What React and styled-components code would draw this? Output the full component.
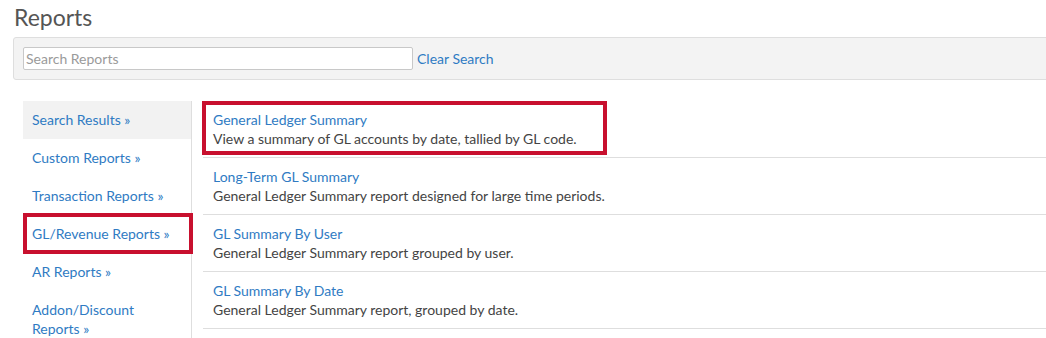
import React from 'react';
import styled, { createGlobalStyle } from 'styled-components';

const GlobalStyle = createGlobalStyle`
  body {
    margin: 0;
    background: #fff;
    font-family: Lato, "Liberation Sans", sans-serif;
    font-size: 14px;
    color: #444;
  }
`

const Page = styled.div`
  padding: 0 0 0 13px;
  overflow: hidden;
`

const Title = styled.h1`
  margin: 0;
  padding: 3px 0 0 1px;
  font-size: 23px;
  font-weight: 400;
  line-height: 28px;
  color: #555;
`

const SearchBar = styled.div`
  margin-top: 6px;
  margin-right: -4px;
  height: 41px;
  display: flex;
  align-items: center;
  gap: 4px;
  padding: 0 9px;
  background: #f3f3f3;
  border: 1px solid #dedede;
  border-radius: 3px;
`

const SearchInput = styled.input`
  width: 390px;
  height: 23px;
  box-sizing: border-box;
  padding: 0 2px;
  border: 1px solid #c8c8c8;
  border-radius: 2px;
  font-family: inherit;
  font-size: 14px;
  color: #444;
  background: #fff;
  &::placeholder {
    color: #9a9a9a;
  }
`

const Link = styled.a`
  color: #2f7bc3;
  text-decoration: none;
  cursor: pointer;
`

const Body = styled.div`
  display: flex;
  margin-top: 21px;
  padding-left: 10px;
`

const Sidebar = styled.ul`
  list-style: none;
  margin: 0;
  padding: 0 0 20px;
  width: 168px;
  flex: none;
  border-right: 1px solid #dedede;
`

const SideItem = styled.li`
  position: relative;
  padding: 9px 9px 10px;
  line-height: 19px;
  background: ${p => (p.active ? '#f2f2f2' : 'transparent')};
  ${p => p.marked && `
    &::after {
      content: '';
      position: absolute;
      top: -2px;
      left: 0;
      right: -2px;
      bottom: -1px;
      border: 4px solid #c8102e;
    }
  `}
`

const ReportList = styled.div`
  flex: 1;
  margin-left: 11px;
`

const ReportRow = styled.div`
  padding: 9px 10px 9px;
  border-bottom: 1px solid #dedede;
  line-height: 19px;
`

const RowContent = styled.div`
  position: relative;
  width: fit-content;
  ${p => p.marked && `
    &::after {
      content: '';
      position: absolute;
      top: -9px;
      left: -11px;
      right: -30px;
      bottom: -7px;
      border: 4px solid #c8102e;
    }
  `}
`

const Desc = styled.div`
  color: #444;
`

const sections = [
  'Search Results »',
  'Custom Reports »',
  'Transaction Reports »',
  'GL/Revenue Reports »',
  'AR Reports »',
  'Addon/Discount Reports »',
];

const reports = [
  { title: 'General Ledger Summary', desc: 'View a summary of GL accounts by date, tallied by GL code.' },
  { title: 'Long-Term GL Summary', desc: 'General Ledger Summary report designed for large time periods.' },
  { title: 'GL Summary By User', desc: 'General Ledger Summary report grouped by user.' },
  { title: 'GL Summary By Date', desc: 'General Ledger Summary report, grouped by date.' },
];

export default function App() {
  return (
    <Page>
      <GlobalStyle />
      <Title>Reports</Title>
      <SearchBar>
        <SearchInput placeholder="Search Reports" />
        <Link>Clear Search</Link>
      </SearchBar>
      <Body>
        <Sidebar>
          {sections.map((s, i) => (
            <SideItem key={s} active={i === 0} marked={i === 3}>
              <Link>{s}</Link>
            </SideItem>
          ))}
        </Sidebar>
        <ReportList>
          {reports.map((r, i) => (
            <ReportRow key={r.title}>
              <RowContent marked={i === 0}>
                <Link>{r.title}</Link>
                <Desc>{r.desc}</Desc>
              </RowContent>
            </ReportRow>
          ))}
        </ReportList>
      </Body>
    </Page>
  );
}
